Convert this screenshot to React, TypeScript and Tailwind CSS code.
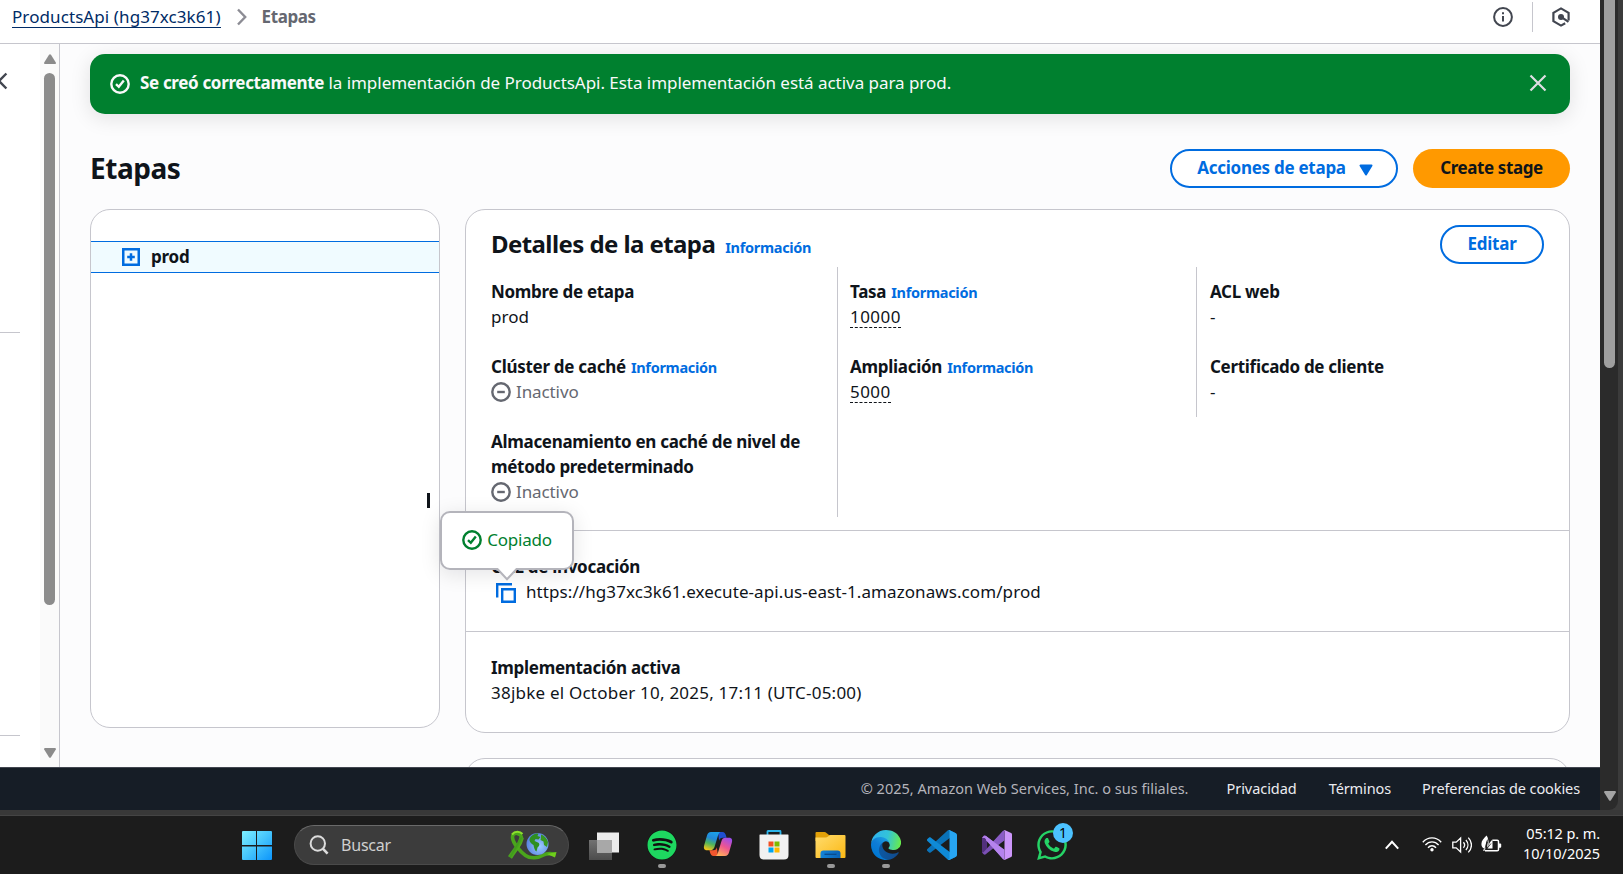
import type { ReactNode } from "react";
import { FaSpotify, FaWhatsapp } from "react-icons/fa";

function CheckCircle({ className }: { className: string }) {
  return (
    <svg viewBox="0 0 20 20" className={className} fill="none" stroke="currentColor" strokeWidth="2.4">
      <circle cx="10" cy="10" r="8.7" />
      <path d="M6 10.2 8.8 12.8 13.8 6.6" />
    </svg>
  );
}

function Info() {
  return <span className="text-[14.5px] font-bold tracking-[-0.3px] text-[#006ce0]">Información</span>;
}

function Inactive() {
  return (
    <div className="flex h-[25px] items-center gap-[5px] text-[#656871]">
      <svg viewBox="0 0 20 20" className="mt-px size-5" fill="none" stroke="currentColor" strokeWidth="2.4">
        <circle cx="10" cy="10" r="8.7" />
        <path d="M6.200 10h7.600" />
      </svg>
      <span className="tracking-[-0.1px]">Inactivo</span>
    </div>
  );
}

function Field({ name, info, children }: { name: string; info?: boolean; children: ReactNode }) {
  return (
    <div>
      {info ? (
        <div className="flex h-[25px] items-baseline gap-[5px]">
          <span className="font-bold tracking-[-0.28px]">{name}</span>
          <Info />
        </div>
      ) : (
        <div className="font-bold tracking-[-0.3px]">{name}</div>
      )}
      {children}
    </div>
  );
}

function Dashed({ children }: { children: ReactNode }) {
  return (
    <div className="flex h-[25px]">
      <span className="h-6 border-b border-dashed border-[#0f141a] tracking-[0.45px]">{children}</span>
    </div>
  );
}

function Header() {
  return (
    <header className="flex h-11 shrink-0 items-start border-b border-[#c6c6cd] bg-white pl-3">
      <a className="mt-1 h-6 border-b border-[#002b66] leading-[25px] tracking-[0.09px] text-[#002b66]">
        ProductsApi (hg37xc3k61)
      </a>
      <svg viewBox="0 0 12 18" className="mt-2 ml-[15px] h-[18px] w-3" fill="none" stroke="#8c8c94" strokeWidth="2.4">
        <path d="M2 1.5 9.2 9 2 16.5" />
      </svg>
      <span className="mt-1 ml-[14px] font-bold leading-[25px] tracking-[-0.42px] text-[#656871]">Etapas</span>
      <div className="mr-[29px] ml-auto flex h-[34px] items-center">
        <svg viewBox="0 0 20 20" className="size-5" fill="none" stroke="#424650" strokeWidth="2">
          <circle cx="10" cy="10" r="8.9" />
          <path d="M10 8.9v5.6M10 5.3v2" />
        </svg>
        <div className="mr-[18px] ml-[19px] h-[30px] w-px bg-[#c6c6cd]" />
        <svg viewBox="0 0 20 20" className="size-5" fill="none" stroke="#424650" strokeWidth="2.2">
          <path d="M17.600 13.500V5.800L10 1.400 2.400 5.800v8.400L10 18.600l4.200-2.400" />
          <circle cx="10" cy="9.900" r="3" fill="#424650" stroke="none" />
          <path d="m10.500 10.200 7 4.600" />
        </svg>
      </div>
    </header>
  );
}

function SideNav() {
  return (
    <aside className="flex w-[60px] shrink-0 border-r border-[#c6c6cd] bg-white">
      <div className="flex w-10 flex-col items-start">
        <svg viewBox="0 0 8 18" className="mt-7 h-[18px] w-2" fill="none" stroke="#424650" strokeWidth="2.4">
          <path d="M6.4 1.5-1 9l7.4 7.5" />
        </svg>
        <div className="mt-[242px] h-px w-5 bg-[#c6c6cd]" />
        <div className="mt-[402px] h-px w-5 bg-[#c6c6cd]" />
      </div>
      <div className="flex w-[19px] flex-col items-center bg-[#fafafa] pt-[10px]">
        <svg viewBox="0 0 14 11" className="h-[11px] w-[14px]" fill="#8b8b8b">
          <path d="M6 .8Q7-.4 8 .8l4.8 7.6Q13.400 10 12 10H2Q.6 10 1.200 8.400z" />
        </svg>
        <div className="mt-2 h-[532px] w-[11px] rounded-full bg-[#8b8b8b]" />
        <svg viewBox="0 0 14 11" className="mt-[143px] h-[11px] w-[14px]" fill="#8b8b8b">
          <path d="M6 9.200Q7 10.400 8 9.200l4.800-7.600Q13.400 0 12 0H2Q.6 0 1.200 1.600z" />
        </svg>
      </div>
    </aside>
  );
}

function Banner() {
  return (
    <div className="flex h-[60px] shrink-0 items-center rounded-[15px] bg-[#00802f] pr-[23px] pl-5 text-[#f9f9fa] shadow-[0_4px_20px_1px_rgba(0,7,22,0.1)]">
      <CheckCircle className="size-5" />
      <p className="mb-1 ml-[10px] tracking-[-0.04px]">
        <span className="font-bold tracking-[-0.34px]">Se creó correctamente</span> la implementación de ProductsApi.
        Esta implementación está activa para prod.
      </p>
      <svg viewBox="0 0 18 18" className="mb-0.5 ml-auto size-[18px]" fill="none" stroke="#dedee3" strokeWidth="2.2">
        <path d="m1.500 1.500 15 15M16.500 1.500l-15 15" />
      </svg>
    </div>
  );
}

function CopiedTooltip() {
  return (
    <div className="absolute bottom-[33px] left-[-56px] flex h-[59px] w-[134px] items-center justify-center gap-[5px] rounded-[10px] border-2 border-[#b4b4bb] bg-white text-[#00802f] shadow-[0_4px_20px_1px_rgba(0,7,22,0.1)]">
      <CheckCircle className="size-5" />
      <span className="mb-px tracking-[-0.2px]">Copiado</span>
      <svg viewBox="0 0 26 14" className="absolute top-[54px] left-[52px] h-[14px] w-[26px]">
        <path d="M2 0h22L13 12z" fill="#fff" />
        <path d="M1 2h2.500L13 12.300 22.500 2H25" fill="none" stroke="#b4b4bb" strokeWidth="2" />
      </svg>
    </div>
  );
}

function StageDetails() {
  return (
    <section className="flex flex-col rounded-[20px] border border-[#c6c6cd] bg-white">
      <div className="flex h-[54px] items-center justify-between pt-[15px] pr-[25px] pl-[25px]">
        <h2 className="flex items-baseline pt-[2px] text-[24px] font-bold tracking-[-0.58px]">
          Detalles de la etapa
          <span className="ml-[10px] flex">
            <Info />
          </span>
        </h2>
        <button className="h-[39px] w-[104px] rounded-full border-2 border-[#006ce0] pb-[3px] font-bold tracking-[-0.25px] text-[#006ce0]">
          Editar
        </button>
      </div>
      <div className="mt-[3px] flex items-start">
        <div className="flex w-[372px] flex-col gap-[25px] border-r border-[#c6c6cd] pt-3 pr-5 pb-[13px] pl-[25px]">
          <Field name="Nombre de etapa">
            <div>prod</div>
          </Field>
          <Field name="Clúster de caché" info>
            <Inactive />
          </Field>
          <Field name="Almacenamiento en caché de nivel de método predeterminado">
            <Inactive />
          </Field>
        </div>
        <div className="flex w-[359px] flex-col gap-[25px] border-r border-[#c6c6cd] pt-3 pb-[13px] pl-[12px]">
          <Field name="Tasa" info>
            <Dashed>10000</Dashed>
          </Field>
          <Field name="Ampliación" info>
            <Dashed>5000</Dashed>
          </Field>
        </div>
        <div className="flex flex-col gap-[25px] pt-3 pb-[13px] pl-[13px]">
          <Field name="ACL web">
            <div>-</div>
          </Field>
          <Field name="Certificado de cliente">
            <div>-</div>
          </Field>
        </div>
      </div>
      <div className="mt-[13px] border-t border-[#c6c6cd] pt-[23px] pb-[27px] pl-[25px]">
        <Field name="URL de invocación">
          <div className="flex items-center">
            <div className="relative top-px ml-[5px] size-5">
              <svg viewBox="0 0 20 20" className="size-5" fill="none" stroke="#006ce0" strokeWidth="2.4">
                <path d="M1.200 14.500V1.200H16M6.200 6.200h12.600v12.600H6.200z" />
              </svg>
              <CopiedTooltip />
            </div>
            <span className="ml-[10px] tracking-[0.08px]">https://hg37xc3k61.execute-api.us-east-1.amazonaws.com/prod</span>
          </div>
        </Field>
      </div>
      <div className="border-t border-[#c6c6cd] pt-[23px] pb-[27px] pl-[25px]">
        <Field name="Implementación activa">
          <div className="tracking-[0.22px]">38jbke el October 10, 2025, 17:11 (UTC-05:00)</div>
        </Field>
      </div>
    </section>
  );
}

function Main() {
  return (
    <main className="flex min-w-0 flex-1 flex-col overflow-hidden bg-[#fcfcfd] pt-[10px] pr-[30px] pl-[30px]">
      <Banner />
      <div className="mt-[35px] flex h-[39px] shrink-0 items-center gap-[15px]">
        <h1 className="mr-auto text-[28px] font-bold tracking-[-0.45px]">Etapas</h1>
        <button className="flex h-[39px] w-[228px] items-center justify-center gap-[13px] rounded-full border-2 border-[#006ce0] bg-white pb-[3px] pl-[2px] font-bold tracking-[-0.27px] text-[#006ce0]">
          Acciones de etapa
          <svg viewBox="0 0 14 12" className="mt-[5px] h-3 w-[14px]" fill="#006ce0">
            <path d="M1.500 1.500h11L7 10.500z" stroke="#006ce0" strokeWidth="2" strokeLinejoin="round" />
          </svg>
        </button>
        <button className="h-[39px] w-[157px] rounded-full bg-[#ff9900] pb-[3px] font-bold tracking-[-0.41px]">
          Create stage
        </button>
      </div>
      <div className="mt-[21px] flex shrink-0 items-start gap-[25px]">
        <section className="relative h-[519px] w-[350px] rounded-[20px] border border-[#c6c6cd] bg-white pt-[31px]">
          <div className="flex h-8 items-center border-y border-[#006ce0] bg-[#f0fbff] pl-[31px]">
            <svg viewBox="0 0 18 18" className="size-[18px]" fill="none" stroke="#006ce0" strokeWidth="2.500">
              <path d="M1.250 1.250h15.500v15.500H1.250zM9 5.200v7.600M5.200 9h7.600" />
            </svg>
            <span className="mb-0.5 ml-[11px] font-bold tracking-[-0.25px]">prod</span>
          </div>
          <div className="absolute top-[283px] left-[336px] h-[15px] w-[3px] bg-[#0f141a]" />
        </section>
        <div className="flex min-w-0 flex-1 flex-col gap-[25px]">
          <StageDetails />
          <div className="h-[60px] rounded-[20px] border border-[#c6c6cd] bg-white" />
        </div>
      </div>
    </main>
  );
}

function Footer() {
  return (
    <footer className="flex h-[43px] shrink-0 items-center justify-end border-t border-[#424650] bg-[#161d26] pr-[20px] pb-[2px] text-[14.5px] text-[#ebebf0]">
      <span className="mr-[38px] text-[#b4b4bb]">© 2025, Amazon Web Services, Inc. o sus filiales.</span>
      <span className="mr-8 tracking-[-0.05px]">Privacidad</span>
      <span className="mr-[31px] tracking-[-0.1px]">Términos</span>
      <span className="tracking-[-0.1px]">Preferencias de cookies</span>
    </footer>
  );
}

function PageScrollbar() {
  return (
    <div className="flex w-[23px] shrink-0 bg-[#3b3b3b]">
      <div className="flex h-full w-[18px] flex-col items-center rounded-br-[9px] bg-[#2b2b2b] pl-px">
        <div className="h-[368px] w-[11px] rounded-b-full bg-[#9f9f9f]" />
        <svg viewBox="0 0 14 11" className="mt-auto mb-[8px] h-[11px] w-[14px]" fill="#a5a5a5">
          <path d="M6 9.200Q7 10.400 8 9.200l4.800-7.600Q13.400 0 12 0H2Q.6 0 1.200 1.600z" />
        </svg>
      </div>
    </div>
  );
}

function SearchArt() {
  return (
    <svg viewBox="0 0 50 30" className="h-[30px] w-[50px]">
      <defs>
        <linearGradient id="ribbon" x1="0" y1="0" x2="1" y2="1">
          <stop offset="0" stopColor="#7fd321" />
          <stop offset="0.5" stopColor="#3f9a1c" />
          <stop offset="1" stopColor="#7ee01c" />
        </linearGradient>
        <radialGradient id="globe" cx="0.6" cy="0.6" r="0.7">
          <stop offset="0" stopColor="#9ccbff" />
          <stop offset="1" stopColor="#4f78dc" />
        </radialGradient>
      </defs>
      <path d="M14.500 9C15.500 2.500 5 1 5.500 7.500c.5 6 8 14.500 13 18 5 3.500 13 2.500 18-.5 4-2.200 7-1.500 12-.8" fill="none" stroke="#4aa51c" strokeWidth="3.600" />
      <path d="M14.500 7.500C14 14 8 19 3 27.500" fill="none" stroke="url(#ribbon)" strokeWidth="4.500" />
      <path d="M5 4.500C8 .8 13 1.200 15.500 4" fill="none" stroke="#8be02c" strokeWidth="2" />
      <path d="m40 24 9.500-2-1.500 5.500z" fill="#6fce1c" />
      <circle cx="30.500" cy="14" r="11" fill="url(#globe)" />
      <path d="M21.500 9c1-3 5-6 9-5.500l-1 2.500 3 1-2 2.500-3-.5-1 2 3.500 1.500c2.500 1.500 1 4-.5 5l-1 4c-2-1-2.500-4-3-6.500-2-1-4.500-3.500-4-6z" fill="#2f8f22" transform="translate(1)" />
      <path d="M34 4.500c3 1 6 4 7 7.500l-1 5-3-2-.5-3.500-3-1.500.5-2.500z" fill="#38961f" />
    </svg>
  );
}

function CopilotIcon() {
  return (
    <svg viewBox="0 0 30 26" className="h-[26px] w-[30px]">
      <defs>
        <linearGradient id="cpA" x1="0.6" y1="0" x2="0.3" y2="1">
          <stop offset="0" stopColor="#1ba0e8" />
          <stop offset="0.35" stopColor="#2388d8" />
          <stop offset="0.65" stopColor="#4fb35c" />
          <stop offset="1" stopColor="#f3c419" />
        </linearGradient>
        <linearGradient id="cpB" x1="0.8" y1="0" x2="0.3" y2="1">
          <stop offset="0" stopColor="#9a4df0" />
          <stop offset="0.5" stopColor="#ee5590" />
          <stop offset="1" stopColor="#ffb05a" />
        </linearGradient>
      </defs>
      <path d="M15 1h4.500c2 0 2.800 1.500 3.300 3l.8 2.800h-4c-2 0-3 1-3.500 3z" fill="#1e4fd0" />
      <path d="M15 25h-4.500c-2 0-2.800-1.500-3.300-3l-.8-2.800h4c2 0 3-1 3.500-3z" fill="#f2562e" />
      <path d="M8 1h9.500c-1.500.5-2 2-2.500 3.500L11.500 16c-.7 2-1.800 3.200-4 3.200H4C1 19.200.4 17 1.200 14.200L4 4.500C4.700 2.300 5.800 1 8 1z" fill="url(#cpA)" />
      <path d="M22 25h-9.500c1.500-.5 2-2 2.500-3.500L18.500 10c.7-2 1.800-3.200 4-3.200H26c3 0 3.600 2.200 2.800 5L26 21.500c-.7 2.200-1.800 3.500-4 3.500z" fill="url(#cpB)" />
    </svg>
  );
}

function StoreIcon() {
  return (
    <svg viewBox="0 0 30 30" className="size-[30px]">
      <path d="M8.500 6V1.500Q8.500 1 9 1h12q.5 0 .5.500V6" fill="none" stroke="#2cb4ea" strokeWidth="1.800" />
      <path d="M0.500 5Q.5 4.500 1 4.500h28q.5 0 .5.500v20q0 4.500-4.500 4.500H5Q.5 29.500.5 25z" fill="#f1f1f1" />
      <path d="M9.500 11.500h5v5h-5z" fill="#f25022" />
      <path d="M15.500 11.500h5v5h-5z" fill="#7fba00" />
      <path d="M9.500 17.500h5v5h-5z" fill="#00a4ef" />
      <path d="M15.500 17.500h5v5h-5z" fill="#ffb900" />
    </svg>
  );
}

function FolderIcon() {
  return (
    <svg viewBox="0 0 31 28" className="h-7 w-[31px]">
      <defs>
        <linearGradient id="fold" x1="0" y1="0" x2="1" y2="1">
          <stop offset="0" stopColor="#ffdc6e" />
          <stop offset="1" stopColor="#fcb813" />
        </linearGradient>
        <linearGradient id="tray" x1="0" y1="0" x2="1" y2="0">
          <stop offset="0" stopColor="#1484d8" />
          <stop offset="1" stopColor="#0a62b4" />
        </linearGradient>
      </defs>
      <path d="M.5 2Q.5 1 1.500 1h8q1 0 2 1L14 4h6v6H.5z" fill="#e2a008" />
      <path d="M.5 6.500h10Q12 6.500 13 5.500T15.500 4h14q1 0 1 1v21q0 1-1 1h-28q-1 0-1-1z" fill="url(#fold)" />
      <path d="M5.500 27v-4.500q0-3 3-3h14q3 0 3 3V27z" fill="url(#tray)" />
      <path d="M9.500 23.300h12" stroke="#0a4a8c" strokeWidth="1.300" />
    </svg>
  );
}

function EdgeIcon() {
  return (
    <svg viewBox="0 0 256 256" className="size-[30px]">
      <defs>
        <linearGradient id="eg1" x1="63" y1="177" x2="241" y2="177" gradientUnits="userSpaceOnUse">
          <stop offset="0" stopColor="#0c59a4" />
          <stop offset="1" stopColor="#114a8b" />
        </linearGradient>
        <linearGradient id="eg2" x1="157" y1="100" x2="46" y2="221" gradientUnits="userSpaceOnUse">
          <stop offset="0" stopColor="#1b9de2" />
          <stop offset="0.5" stopColor="#0f7cd6" />
          <stop offset="1" stopColor="#0078d4" />
        </linearGradient>
        <linearGradient id="eg3" x1="20" y1="60" x2="250" y2="110" gradientUnits="userSpaceOnUse">
          <stop offset="0" stopColor="#2fb4ec" />
          <stop offset="0.5" stopColor="#33c3d8" />
          <stop offset="1" stopColor="#66eb4e" />
        </linearGradient>
      </defs>
      <path fill="url(#eg1)" d="M231 190.500c-3.400 1.800-6.900 3.400-10.500 4.700a101.900 101.900 0 0 1-35.900 6.500c-47.300 0-88.500-32.500-88.500-74.300.1-11.400 6.400-21.900 16.400-27.300-42.800 1.800-53.800 46.400-53.800 72.500 0 74 68.100 81.400 82.800 81.400 7.900 0 19.800-2.300 27-4.600l1.300-.4a128.300 128.300 0 0 0 66.600-52.800 4 4 0 0 0-5.400-5.700z" />
      <path fill="url(#eg2)" d="M105.700 241.400a79.200 79.200 0 0 1-22.700-21.300 80.700 80.700 0 0 1 29.500-120c3.200-1.500 8.500-4.100 15.600-4a32.400 32.400 0 0 1 25.700 13 31.900 31.900 0 0 1 6.300 18.700c0-.2 24.500-79.600-80-79.600-43.900 0-80 41.700-80 78.200a130.200 130.200 0 0 0 12.100 56 128 128 0 0 0 156.400 67.100 75.500 75.500 0 0 1-62.800-8z" />
      <path fill="url(#eg3)" d="M152.300 148.900c-.9 1-3.400 2.500-3.400 5.600 0 2.600 1.700 5.200 4.800 7.300 14.500 10.100 41.900 8.800 42 8.800a60.300 60.300 0 0 0 30.600-8.500A61.900 61.900 0 0 0 256.800 109c.3-22.400-8-37.200-11.300-43.900C224.100 23.300 177.700 0 128 0A128 128 0 0 0 0 126.200c.5-36.500 36.800-66 80-66 3.500 0 23.500.3 42 10.100 16.300 8.600 24.900 19 30.900 29.200 6.200 10.700 7.300 24.200 7.300 29.600s-2.800 13.400-7.900 19.800z" />
    </svg>
  );
}

function CodeIcon() {
  return (
    <svg viewBox="0 0 100 100" className="size-[30px]">
      <path fill="#0a72b8" d="M96.460 10.800 75.860.87C73.470-.27 70.620.21 68.750 2.080L1.300 63.580c-1.820 1.660-1.810 4.520 0 6.170l5.510 5.010c1.490 1.350 3.720 1.450 5.320.24L93.360 13.330c2.730-2.070 6.640-.12 6.640 3.300z" />
      <path fill="#0f8ad6" d="M96.460 89.200 75.860 99.130c-2.390 1.150-5.240.66-7.110-1.210L1.300 36.420c-1.820-1.660-1.810-4.520 0-6.170l5.510-5.010c1.490-1.350 3.720-1.450 5.320-.24l81.230 61.670c2.730 2.070 6.640.12 6.640-3.300z" />
      <path fill="#27a5f2" d="M75.860 99.130c-2.390 1.150-5.240.66-7.110-1.210 2.310 2.310 6.250.67 6.250-2.590V4.670c0-3.260-3.940-4.890-6.250-2.590 1.870-1.870 4.720-2.350 7.110-1.210l20.600 9.910C98.620 11.820 100 14 100 16.410v67.180c0 2.400-1.380 4.580-3.540 5.630z" />
    </svg>
  );
}

function VisualStudioIcon() {
  return (
    <svg viewBox="0 0 100 100" className="size-[30px]">
      <path fill="#52307c" d="M0 25 6 19Q9 17 12 19L17 24V76L12 81Q9 83 6 81L0 75z" />
      <path fill="#7a50b4" d="M72 1 5 74 0 75l6 6q3 2 6 0L73 34z" />
      <path fill="#b07be8" d="M72 99 9 27 0 27 6 19q3-2 6 0L73 66z" />
      <path fill="#cc96fa" d="M72 1Q74-1 77 .5L97 10q3 1.500 3 5v70q0 3.500-3 5L77 99.500Q74 101 72 99 75 101 75 95V5Q75-1 72 1z" />
      <path fill="#8a5cc6" d="M28 48 70 3q5-2 5 3v28L44 58z" />
      <path fill="#b583ee" d="M12 19 75 66v29q-1 6-5 2L14 35z" />
    </svg>
  );
}

function TaskItem({ className, running, children }: { className: string; running?: boolean; children: ReactNode }) {
  return (
    <div className={`flex h-[38px] flex-col items-center justify-between ${className}`}>
      <div className="flex h-[30px] items-center">{children}</div>
      {running && <div className="h-1 w-2 rounded-full bg-[#989898]" />}
    </div>
  );
}

function Taskbar() {
  return (
    <div className="flex h-[58px] shrink-0 items-start bg-[#1c1c1c] pr-[23px] pl-[242px]">
      <svg viewBox="0 0 30 30" className="mt-[15px] size-[30px]">
        <defs>
          <linearGradient id="win" x1="0" y1="0" x2="30" y2="30" gradientUnits="userSpaceOnUse">
            <stop offset="0" stopColor="#7df0ff" />
            <stop offset="0.5" stopColor="#45c4fc" />
            <stop offset="1" stopColor="#0a93fb" />
          </linearGradient>
        </defs>
        <path fill="url(#win)" d="M1 0h13v14H0V1q0-1 1-1zM15 0h14q1 0 1 1v13H15zM0 15.500h14V29H1q-1 0-1-1zM15 15.500h15V28q0 1-1 1H15z" />
      </svg>
      <div className="mt-[9px] ml-[22px] flex h-10 w-[275px] items-center rounded-full border border-[#4a4a4a] border-t-[#6a6a6a] bg-[#3c3c3c] pr-[11px] pl-[14px]">
        <svg viewBox="0 0 20 20" className="size-5" fill="none" stroke="#dcdcdc" strokeWidth="2">
          <circle cx="8.800" cy="8.500" r="7.200" fill="#4a4a4a" />
          <path d="m13.800 13.600 4.800 5" strokeWidth="2.600" />
        </svg>
        <span className="ml-[12px] text-[16px] tracking-[-0.2px] text-[#cfcfcf]">Buscar</span>
        <div className="ml-auto">
          <SearchArt />
        </div>
      </div>
      <TaskItem className="mt-[15px] ml-5">
        <svg viewBox="0 0 30 29" className="h-[29px] w-[30px]">
          <defs>
            <linearGradient id="tvb" x1="0" y1="0" x2="0" y2="1">
              <stop offset="0" stopColor="#727272" />
              <stop offset="1" stopColor="#4c4c4c" />
            </linearGradient>
          </defs>
          <path d="M0 8h23v20H0z" fill="url(#tvb)" />
          <path d="M8 .5h22v20H8z" fill="#ececec" />
          <path d="M8 8h15v12.500H8z" fill="#a8a8a8" />
        </svg>
      </TaskItem>
      <TaskItem className="mt-[14px] ml-7" running>
        <div className="flex size-[30px] items-center justify-center rounded-full bg-[#111111]">
          <FaSpotify className="size-[30px] text-[#1ed760]" />
        </div>
      </TaskItem>
      <TaskItem className="mt-[13px] ml-[26px]">
        <CopilotIcon />
      </TaskItem>
      <TaskItem className="mt-[14px] ml-[26px]">
        <StoreIcon />
      </TaskItem>
      <TaskItem className="mt-[14px] ml-[26px]" running>
        <FolderIcon />
      </TaskItem>
      <TaskItem className="mt-[14px] ml-[25px]" running>
        <EdgeIcon />
      </TaskItem>
      <TaskItem className="mt-[14px] ml-[26px]">
        <CodeIcon />
      </TaskItem>
      <TaskItem className="mt-[14px] ml-[25px]">
        <VisualStudioIcon />
      </TaskItem>
      <TaskItem className="mt-[14px] ml-[23px]">
        <div className="relative">
          <FaWhatsapp className="size-[34px] text-[#25d366]" />
          <span className="absolute -top-[5px] left-[18px] flex size-5 items-center justify-center rounded-full bg-[#4cc2ff] text-[14px] leading-5 text-black">
            1
          </span>
        </div>
      </TaskItem>
      <svg viewBox="0 0 14 10" className="mt-6 ml-auto h-[10px] w-[14px]" fill="none" stroke="#fff" strokeWidth="2">
        <path d="m.8 8.600 6.200-6.800 6.200 6.800" />
      </svg>
      <svg viewBox="0 0 20 16" className="mt-[20px] ml-[23px] h-4 w-5" fill="none" stroke="#fff" strokeWidth="1.400">
        <path d="M.8 6.200c5-5.800 13.400-5.800 18.400 0M3.400 9c3.700-4.200 9.500-4.200 13.200 0M6 11.700c2.300-2.700 5.700-2.700 8 0" />
        <circle cx="10" cy="13.700" r="1.700" fill="#fff" stroke="none" />
      </svg>
      <svg viewBox="0 0 20 18" className="mt-[20px] ml-[10px] h-[18px] w-5" fill="none" stroke="#fff" strokeWidth="1.300">
        <path d="M.8 6.200h3.400L8.600 2v14l-4.400-4.200H.8zM11.400 6.200c1.500 1.700 1.500 3.900 0 5.600M13.900 4c2.700 3 2.700 7 0 10M16.300 1.600c4.200 4.400 4.200 10.400 0 14.800" />
      </svg>
      <svg viewBox="0 0 21 18" className="mt-[19px] ml-[9px] h-[18px] w-[21px]" fill="none">
        <path d="M11.500 5.200h4.700q1.300 0 1.300 1.300v8q0 1.300-1.300 1.300H4" stroke="#fff" strokeWidth="1.500" />
        <path d="M18 8.500h1.300q.9 0 .9.900v2.400q0 .9-.9.900H18z" fill="#fff" />
        <path d="M5.500.5C3 3 .4 5.500.4 9c0 2.400 1.200 4 2.800 4.600L2 15.500l1.300.5 1.500-2.400C4.500 9 5 7 6.500 4 7 7 6.500 9 6 12.500 8 11 8 7.500 7 4 6.800 2.500 6.300 1.300 5.500.5z" fill="#fff" />
        <path d="M11.500 4.500v9H6.500c1-4 2-6.500 5-9z" fill="#fff" />
        <path d="M4 14.500C4.500 11 5.500 8.500 6.500 7M6 13.500l4-5" stroke="#1c1c1c" strokeWidth="0.800" />
      </svg>
      <div className="mt-[7px] w-[98px] text-right text-[14.5px] leading-5 text-white">
        <div className="tracking-[-0.1px]">05:12 p. m.</div>
        <div className="tracking-[-0.02px]">10/10/2025</div>
      </div>
    </div>
  );
}

export default function App() {
  return (
    <div className="flex h-[874px] w-[1623px] flex-col overflow-hidden bg-[#1c1c1c] font-['Noto_Sans',sans-serif] text-[17px] leading-[25px] text-[#0f141a]">
      <div className="flex h-[810px] shrink-0">
        <div className="flex w-[1600px] flex-col">
          <Header />
          <div className="flex min-h-0 flex-1">
            <SideNav />
            <Main />
          </div>
          <Footer />
        </div>
        <PageScrollbar />
      </div>
      <div className="h-1.5 shrink-0 border-b border-[#444444] bg-[#383838]" />
      <Taskbar />
    </div>
  );
}
